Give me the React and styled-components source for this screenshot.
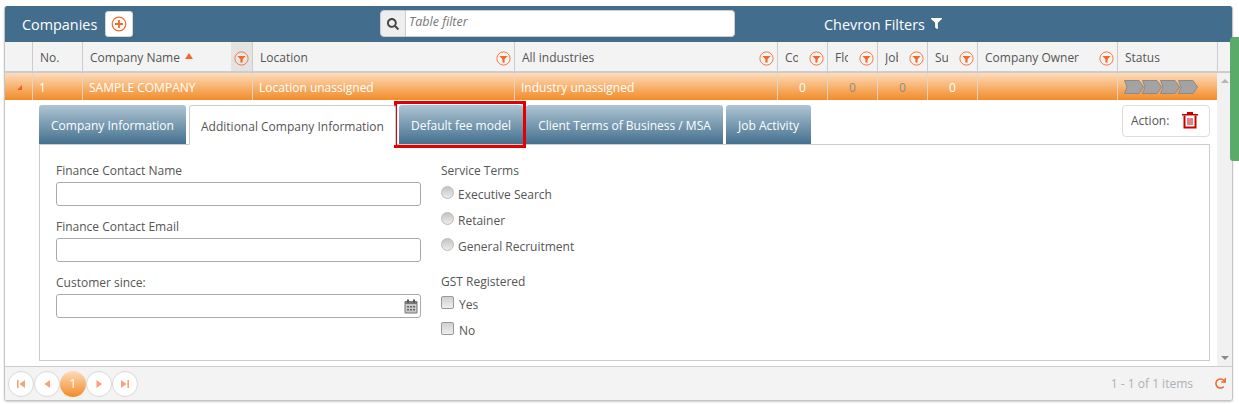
import React from 'react';
import styled, { createGlobalStyle } from 'styled-components';
import { FaSearch, FaFilter, FaRedo } from 'react-icons/fa';

const COLUMNS = '28px 50px 170px 262px 263px 50px 50px 50px 50px 140px 100px 15px';

const headers = [
    { label: '' },
    { label: 'No.' },
    { label: 'Company Name', sorted: true, filter: true },
    { label: 'Location', filter: true },
    { label: 'All industries', filter: true },
    { label: 'Company Count', filter: true, narrow: true },
    { label: 'Flow', filter: true, narrow: true },
    { label: 'Jobs', filter: true, narrow: true },
    { label: 'Submitted', filter: true, narrow: true },
    { label: 'Company Owner', filter: true },
    { label: 'Status' },
    { label: '' },
];

const tabs = [
    { label: 'Company Information', width: 147 },
    { label: 'Additional Company Information', width: 207, active: true },
    { label: 'Default fee model', width: 124, marked: true },
    { label: 'Client Terms of Business / MSA', width: 197 },
    { label: 'Job Activity', width: 85 },
];

const FilterIcon = () => (
    <svg width="15" height="15" viewBox="0 0 15 15">
        <circle cx="7.5" cy="7.5" r="6.6" fill="#fff" fillOpacity="0.15" stroke="#f27b3c" strokeWidth="1" />
        <path d="M3.4 5h8.2L8.6 8.2V11.4H6.4V8.2z" fill="#f2692a" />
    </svg>
);

const AddIcon = () => (
    <svg width="16" height="16" viewBox="0 0 16 16">
        <circle cx="8" cy="8" r="6.8" fill="none" stroke="#f2692a" strokeWidth="1.2" />
        <path d="M8 4v8M4 8h8" stroke="#f2692a" strokeWidth="1.8" />
    </svg>
);

const StatusChevrons = () => (
    <svg width="75" height="14" viewBox="0 0 75 14">
        {[54, 36, 18, 0].map(x => (
            <polygon
                key={x}
                points={`${x + 0.5},0.5 ${x + 15},0.5 ${x + 19.5},7 ${x + 15},13.5 ${x + 0.5},13.5 ${x + 3},7`}
                fill="#a3a3a3"
                stroke="#8a8a8a"
                strokeWidth="1"
                strokeLinejoin="round"
            />
        ))}
    </svg>
);

const TrashIcon = () => (
    <svg width="16" height="18" viewBox="0 0 16 18">
        <path d="M0 3h16v1.6H0zM5 1h6v2H5z" fill="#c80000" />
        <path d="M2.5 4.5v12h11v-12" fill="none" stroke="#c80000" strokeWidth="2" />
        <path d="M6 7v7M8 7v7M10 7v7" stroke="#c80000" strokeWidth="1" />
    </svg>
);

const CalendarIcon = () => (
    <svg width="14" height="15" viewBox="0 0 14 15">
        <rect x="0.5" y="2" width="13" height="12.5" fill="#777" rx="1" />
        <rect x="3" y="0.5" width="2" height="3" fill="#555" />
        <rect x="9" y="0.5" width="2" height="3" fill="#555" />
        <rect x="1.5" y="5" width="11" height="8.5" fill="#c8c8c8" />
        <path d="M3 7h2v1.5H3zM6 7h2v1.5H6zM9 7h2v1.5H9zM3 10h2v1.5H3zM6 10h2v1.5H6zM9 10h2v1.5H9z" fill="#666" />
    </svg>
);

const PagerIcon = ({ type }) => {
    const shapes = {
        first: <path d="M2 2h1.6v8H2zM10 2v8L4.5 6z" />,
        prev: <path d="M9 2v8L3.5 6z" />,
        next: <path d="M3.5 2v8L9 6z" />,
        last: <path d="M2 2v8L7.5 6zM8.4 2H10v8H8.4z" />,
    };
    return (
        <svg width="12" height="12" viewBox="0 0 12 12" fill="#f6a27c">
            {shapes[type]}
        </svg>
    );
};

export default function App() {
    return (
        <Page>
            <GlobalStyle />
            <Grid>
                <Toolbar>
                    <Title>Companies</Title>
                    <AddButton>
                        <AddIcon />
                    </AddButton>
                    <Search>
                        <SearchAddon>
                            <FaSearch />
                        </SearchAddon>
                        <SearchInput placeholder="Table filter" />
                    </Search>
                    <ChevronFilters>
                        Chevron Filters
                        <FaFilter />
                    </ChevronFilters>
                </Toolbar>

                <HeaderRow>
                    {headers.map((header, i) => (
                        <HeaderCell key={i} $last={i === headers.length - 1}>
                            <HeaderLabel $narrow={header.narrow}>{header.label}</HeaderLabel>
                            {header.sorted && <SortArrow />}
                            {header.filter && (
                                <FilterSlot $sorted={header.sorted}>
                                    <FilterIcon />
                                </FilterSlot>
                            )}
                        </HeaderCell>
                    ))}
                </HeaderRow>

                <ScrollArea>
                    <Content>
                        <DataRow>
                            <DataCell>
                                <ExpandArrow />
                            </DataCell>
                            <DataCell>1</DataCell>
                            <DataCell>SAMPLE COMPANY</DataCell>
                            <DataCell>Location unassigned</DataCell>
                            <DataCell>Industry unassigned</DataCell>
                            <DataCell $center>0</DataCell>
                            <DataCell $center $muted>0</DataCell>
                            <DataCell $center $muted>0</DataCell>
                            <DataCell $center>0</DataCell>
                            <DataCell />
                            <DataCell>
                                <StatusChevrons />
                            </DataCell>
                        </DataRow>

                        <Detail>
                            <TabBar>
                                <Tabs>
                                    {tabs.map(tab => (
                                        <Tab key={tab.label} $active={tab.active} $width={tab.width}>
                                            {tab.label}
                                            {tab.marked && <RedMark />}
                                        </Tab>
                                    ))}
                                </Tabs>
                                <ActionBox>
                                    Action:
                                    <TrashIcon />
                                </ActionBox>
                            </TabBar>
                            <Panel>
                                <Column $width="365px">
                                    <Field>
                                        <FieldLabel>Finance Contact Name</FieldLabel>
                                        <TextInput />
                                    </Field>
                                    <Field>
                                        <FieldLabel>Finance Contact Email</FieldLabel>
                                        <TextInput />
                                    </Field>
                                    <Field>
                                        <FieldLabel>Customer since:</FieldLabel>
                                        <DateWrap>
                                            <TextInput />
                                            <CalendarSlot>
                                                <CalendarIcon />
                                            </CalendarSlot>
                                        </DateWrap>
                                    </Field>
                                </Column>
                                <Column $width="300px">
                                    <GroupLabel>Service Terms</GroupLabel>
                                    <RadioRow>
                                        <Radio type="radio" name="terms" />
                                        Executive Search
                                    </RadioRow>
                                    <RadioRow>
                                        <Radio type="radio" name="terms" />
                                        Retainer
                                    </RadioRow>
                                    <RadioRow>
                                        <Radio type="radio" name="terms" />
                                        General Recruitment
                                    </RadioRow>
                                    <GstLabel>GST Registered</GstLabel>
                                    <RadioRow>
                                        <Check type="checkbox" />
                                        Yes
                                    </RadioRow>
                                    <RadioRow>
                                        <Check type="checkbox" />
                                        No
                                    </RadioRow>
                                </Column>
                            </Panel>
                        </Detail>
                    </Content>
                    <Scrollbar>
                        <ScrollUp />
                        <ScrollDown />
                    </Scrollbar>
                </ScrollArea>

                <Pager>
                    <PagerButtons>
                        <PagerButton><PagerIcon type="first" /></PagerButton>
                        <PagerButton><PagerIcon type="prev" /></PagerButton>
                        <PagerButton $current>1</PagerButton>
                        <PagerButton><PagerIcon type="next" /></PagerButton>
                        <PagerButton><PagerIcon type="last" /></PagerButton>
                    </PagerButtons>
                    <PagerInfo>
                        1 - 1 of 1 items
                        <FaRedo />
                    </PagerInfo>
                </Pager>
            </Grid>
            <SideTab />
        </Page>
    );
}

const GlobalStyle = createGlobalStyle`
    html, body {
        margin: 0;
        background: #fff;
        overflow: hidden;
    }
    * {
        box-sizing: border-box;
    }
`;

const Page = styled.div`
    position: relative;
    width: 1239px;
    height: 404px;
    padding: 6px 0 0 4px;
    font-family: 'Open Sans', sans-serif;
    font-size: 12px;
    color: #555;
`;

const Grid = styled.div`
    width: 1229px;
    height: 395px;
    display: flex;
    flex-direction: column;
    border: 1px solid #c5c5c5;
    border-top: 0;
    border-radius: 3px;
    box-shadow: 0 1px 2px rgba(0, 0, 0, 0.2);
    overflow: hidden;
`;

const Toolbar = styled.div`
    height: 36px;
    flex: none;
    display: flex;
    align-items: center;
    background: #436d8d;
    padding: 0 0 0 17px;
    color: #fff;
`;

const Title = styled.div`
    width: 83px;
    font-size: 14.4px;
`;

const AddButton = styled.button`
    width: 28px;
    height: 26px;
    padding: 0;
    display: flex;
    align-items: center;
    justify-content: center;
    background: #fff;
    border: 1px solid #d5d5d5;
    border-radius: 3px;
`;

const Search = styled.div`
    width: 355px;
    height: 27px;
    margin: -1px 0 0 247px;
    display: flex;
`;

const SearchAddon = styled.div`
    width: 26px;
    display: flex;
    align-items: center;
    justify-content: center;
    background: #eee;
    border: 1px solid #ccc;
    border-radius: 4px 0 0 4px;
    color: #444;
    font-size: 12px;
`;

const SearchInput = styled.input`
    flex: 1;
    min-width: 0;
    border: 1px solid #ccc;
    border-left: 0;
    border-radius: 0 4px 4px 0;
    padding: 0 4px 4px 3px;
    font-family: inherit;
    font-size: 12.5px;
    font-style: italic;
    outline: none;

    &::placeholder {
        color: #777;
    }
`;

const ChevronFilters = styled.div`
    margin-left: 89px;
    display: flex;
    align-items: center;
    gap: 6px;
    font-size: 14.4px;

    svg {
        font-size: 11px;
        margin-top: -2px;
    }
`;

const HeaderRow = styled.div`
    height: 31px;
    flex: none;
    display: grid;
    grid-template-columns: ${COLUMNS};
    background: #f3f3f3;
    border-bottom: 2px solid #ccc;
`;

const HeaderCell = styled.div`
    display: flex;
    align-items: center;
    min-width: 0;
    padding-left: 7px;
    border-right: ${props => (props.$last ? '0' : '1px solid #ccc')};
`;

const HeaderLabel = styled.div`
    flex: 0 1 auto;
    min-width: 0;
    max-width: ${props => (props.$narrow ? '13px' : 'none')};
    padding-top: 2px;
    overflow: hidden;
    white-space: nowrap;
    color: #555;
`;

const SortArrow = styled.span`
    width: 0;
    height: 0;
    margin: -1px 0 0 5px;
    border-left: 4px solid transparent;
    border-right: 4px solid transparent;
    border-bottom: 6px solid #f2692a;
`;

const FilterSlot = styled.div`
    flex: none;
    align-self: stretch;
    width: ${props => (props.$sorted ? '21px' : '26px')};
    margin-left: auto;
    padding: 3px 3px 0 0;
    display: flex;
    align-items: center;
    justify-content: flex-end;
    background: ${props => (props.$sorted ? '#e3e3e3' : 'transparent')};
`;

const ScrollArea = styled.div`
    flex: 1;
    min-height: 0;
    display: flex;
`;

const Content = styled.div`
    flex: 1;
    min-width: 0;
`;

const DataRow = styled.div`
    height: 27px;
    display: grid;
    grid-template-columns: ${COLUMNS.replace(' 15px', '')};
    background: linear-gradient(#fddcbc, #f28b27);
    color: #fff;
    font-weight: 500;
`;

const DataCell = styled.div`
    display: flex;
    align-items: center;
    justify-content: ${props => (props.$center ? 'center' : 'flex-start')};
    padding: ${props => (props.$center ? '1px 0 0' : '1px 0 0 6px')};
    border-right: 1px solid #e6d3c2;
    color: ${props => (props.$muted ? '#8f8d8a' : '#fff')};
    white-space: nowrap;
    overflow: hidden;
`;

const ExpandArrow = styled.span`
    width: 0;
    height: 0;
    margin-left: 6px;
    border-left: 5px solid transparent;
    border-bottom: 5px solid #ef5f24;
`;

const Detail = styled.div`
    padding: 5px 7px 0 34px;
`;

const TabBar = styled.div`
    height: 40px;
    display: flex;
    justify-content: space-between;
    align-items: flex-start;
`;

const Tabs = styled.div`
    display: flex;
    gap: 3px;
`;

const Tab = styled.div`
    position: relative;
    width: ${props => props.$width}px;
    height: ${props => (props.$active ? '40px' : '39px')};
    padding-top: 2px;
    display: flex;
    align-items: center;
    justify-content: center;
    border-radius: 3px 3px 0 0;
    z-index: ${props => (props.$active ? 1 : 0)};
    white-space: nowrap;
    color: ${props => (props.$active ? '#555' : '#fff')};
    background: ${props => (props.$active ? '#fff' : 'linear-gradient(#afc5d3, #44708f)')};
    border: ${props => (props.$active ? '1px solid #ccc' : '0')};
    border-bottom: ${props => (props.$active ? '1px solid #fff' : '0')};
`;

const RedMark = styled.span`
    position: absolute;
    top: -4px;
    left: -5px;
    right: -3px;
    bottom: -4px;
    border: 3px solid #e40000;
    pointer-events: none;
`;

const ActionBox = styled.div`
    width: 88px;
    height: 32px;
    display: flex;
    align-items: center;
    gap: 13px;
    padding: 0 0 2px 8px;
    border: 1px solid #ddd;
    border-radius: 4px;
    color: #555;
`;

const Panel = styled.div`
    height: 217px;
    display: flex;
    gap: 20px;
    margin-top: -1px;
    padding: 17px 16px 0;
    border: 1px solid #ccc;
`;

const Column = styled.div`
    width: ${props => props.$width};
    display: flex;
    flex-direction: column;
`;

const Field = styled.div`
    height: 56px;
`;

const FieldLabel = styled.div`
    height: 20px;
    line-height: 18px;
`;

const GroupLabel = styled(FieldLabel)`
    height: 19px;
`;

const GstLabel = styled(FieldLabel)`
    height: 18px;
    margin-top: 14px;
`;

const TextInput = styled.input`
    display: block;
    width: 100%;
    height: 24px;
    border: 1px solid #aaa;
    border-radius: 3px;
    background: #fff;
    outline: none;
`;

const DateWrap = styled.div`
    position: relative;
`;

const CalendarSlot = styled.span`
    position: absolute;
    top: 5px;
    right: 3px;
    display: flex;
`;

const RadioRow = styled.label`
    height: 26px;
    display: flex;
    align-items: center;
    gap: 4px;
`;

const Radio = styled.input`
    appearance: none;
    width: 13px;
    height: 13px;
    margin: -3px 0 0 0;
    border: 1px solid #bbb;
    border-radius: 50%;
    background: linear-gradient(#c4c4c4, #ececec);
`;

const Check = styled.input`
    appearance: none;
    width: 13px;
    height: 13px;
    margin: -3px 1px 0 0;
    border: 1px solid #999;
    border-radius: 2px;
    background: linear-gradient(#d0d0d0, #eee);
`;

const Scrollbar = styled.div`
    position: relative;
    width: 15px;
    flex: none;
    background: #f1f1f1;
`;

const ScrollUp = styled.span`
    position: absolute;
    top: 6px;
    left: 4px;
    border-left: 4px solid transparent;
    border-right: 4px solid transparent;
    border-bottom: 4px solid #b5b5b5;
`;

const ScrollDown = styled.span`
    position: absolute;
    bottom: 6px;
    left: 4px;
    border-left: 4px solid transparent;
    border-right: 4px solid transparent;
    border-top: 4px solid #888;
`;

const Pager = styled.div`
    height: 34px;
    flex: none;
    display: flex;
    align-items: center;
    justify-content: space-between;
    padding: 0 6px 0 3px;
    background: #f3f3f3;
    border-top: 1px solid #ccc;
`;

const PagerButtons = styled.div`
    display: flex;
`;

const PagerButton = styled.div`
    width: 26px;
    height: 26px;
    display: flex;
    align-items: center;
    justify-content: center;
    border-radius: 50%;
    border: ${props => (props.$current ? '0' : '1px solid #d8d8d8')};
    background: ${props => (props.$current ? 'linear-gradient(#fddcbc, #f28b27)' : '#fff')};
    color: #fff;
    font-weight: 500;
`;

const PagerInfo = styled.div`
    display: flex;
    align-items: center;
    gap: 22px;
    color: #aab2b8;

    svg {
        color: #f2692a;
        font-size: 11px;
    }
`;

const SideTab = styled.div`
    position: absolute;
    top: 37px;
    right: 0;
    width: 9px;
    height: 124px;
    background: #5aaa6a;
    border-radius: 3px 0 0 3px;
`;
